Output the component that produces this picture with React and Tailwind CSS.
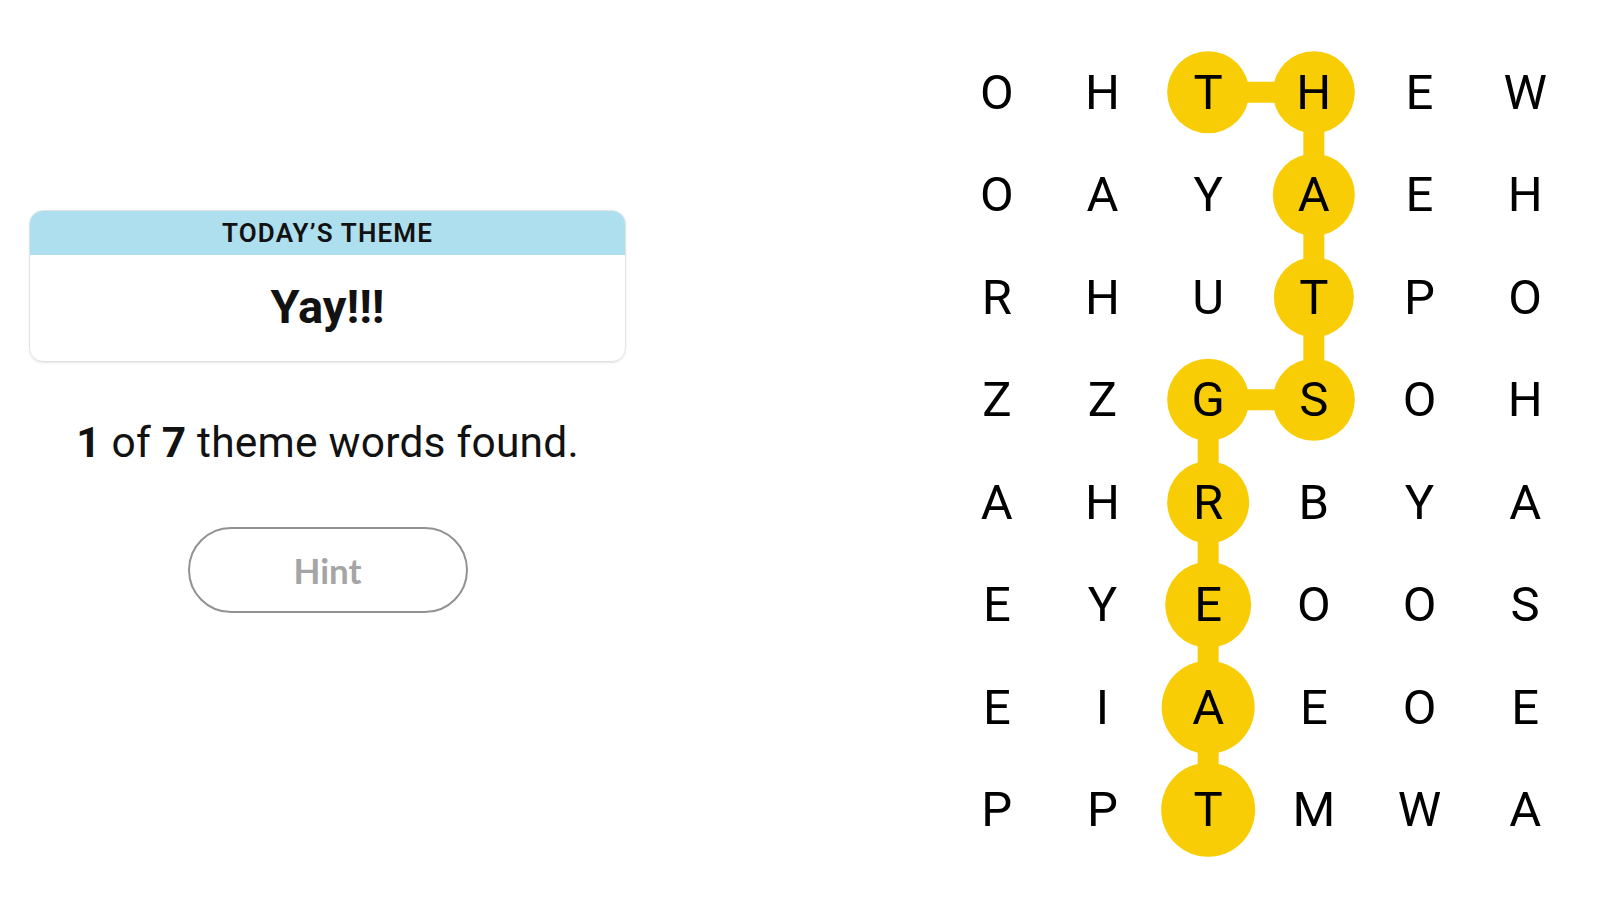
import React from 'react'

const GRID = [
  'OHTHEW',
  'OAYAEH',
  'RHUTPO',
  'ZZGSOH',
  'AHRBYA',
  'EYEOOS',
  'EIAEOE',
  'PPTMWA',
]

// chemin du mot trouvé (ligne, colonne, rayon)
const PATH = [
  [0, 2, 41], [0, 3, 41], [1, 3, 41], [2, 3, 40], [3, 3, 41],
  [3, 2, 41], [4, 2, 41], [5, 2, 43], [6, 2, 46.5], [7, 2, 47],
]

const W = 634
const H = 820
const CW = W / 6
const CH = H / 8
const cx = c => CW * c + CW / 2
const cy = r => CH * r + CH / 2

function Board() {
  return (
    <div className="relative w-[634px] h-[820px]">
      <svg className="absolute inset-0" width={W} height={H} viewBox={`0 0 ${W} ${H}`}>
        {PATH.slice(1).map(([r, c], i) => {
          const [pr, pc] = PATH[i]
          return (
            <line key={'l' + i} x1={cx(pc)} y1={cy(pr)} x2={cx(c)} y2={cy(r)}
              stroke="#f8cd05" strokeWidth="21" />
          )
        })}
        {PATH.map(([r, c, rad], i) => (
          <circle key={'c' + i} cx={cx(c)} cy={cy(r)} r={rad} fill="#f8cd05" />
        ))}
      </svg>
      <div className="relative grid grid-cols-6 grid-rows-8 w-full h-full">
        {GRID.flatMap((row, r) => row.split('').map((ch, c) => (
          <div key={r + '-' + c}
            className="flex items-center justify-center text-[49px] leading-none text-black font-['Roboto',sans-serif]">
            {ch}
          </div>
        )))}
      </div>
    </div>
  )
}

export default function App() {
  return (
    <div className="flex h-[900px] bg-white text-[#121212] overflow-hidden">
      {/* Colonne gauche */}
      <div className="ml-[29px] mt-[210px] w-[597px] flex flex-col items-center flex-shrink-0">
        <div className="w-full rounded-[14px] border-[1.5px] border-[#e2e2e2] overflow-hidden shadow-[0_1px_2px_rgba(0,0,0,0.1)]">
          <div className="h-[44px] bg-[#aedfee] flex items-center justify-center text-[26px] font-semibold tracking-[0.045em] font-['Roboto',sans-serif]">
            TODAY’S THEME
          </div>
          <div className="h-[106px] pb-[2px] flex items-center justify-center text-[47px] font-bold font-['Roboto',sans-serif]">
            Yay!!!
          </div>
        </div>

        <p className="mt-[56px] h-[50px] flex items-center text-[42.5px] font-['Roboto',sans-serif] tracking-[0.005em]">
          <b className="font-bold">1</b>&nbsp;of&nbsp;<b className="font-bold">7</b>&nbsp;theme words found.
        </p>

        <button className="mt-[59px] w-[280px] h-[86px] rounded-full border-2 border-[#929292] text-[35px] font-bold text-[#a5a5a5] font-['Lato',sans-serif]">
          Hint
        </button>
      </div>

      {/* Grille */}
      <div className="ml-[318px] mt-[41px] flex-shrink-0">
        <Board />
      </div>
    </div>
  )
}
